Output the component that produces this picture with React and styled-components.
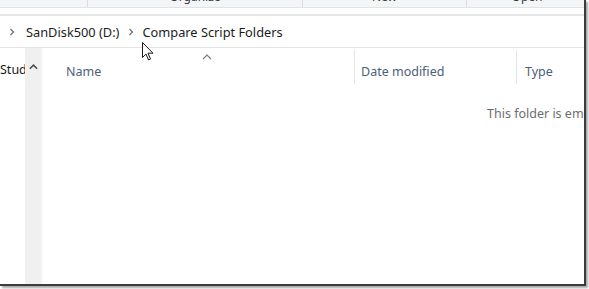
import React from 'react';
import styled, { createGlobalStyle } from 'styled-components';

const GlobalStyle = createGlobalStyle`
  html, body {
    margin: 0;
    padding: 0;
    background: #ffffff;
  }
  body {
    font-family: "Noto Sans", "Open Sans", "Liberation Sans", sans-serif;
  }
`;

const Screen = styled.div`
  position: relative;
  width: 589px;
  height: 289px;
  overflow: hidden;
  background: #ffffff;
`;

const Window = styled.div`
  width: 584px;
  height: 284px;
  display: flex;
  flex-direction: column;
  background: #ffffff;
  border-right: 2px solid #3c3c3c;
  border-bottom: 2px solid #3c3c3c;
  box-shadow: 2px 2px 2px rgba(0, 0, 0, 0.35);
  overflow: hidden;
`;

const Ribbon = styled.div`
  height: 7px;
  flex: none;
  display: flex;
  background: #f4f5f6;
  border-bottom: 1px solid #e1e2e3;
`;

const RibbonGroup = styled.div`
  width: ${p => p.$w}px;
  flex: none;
  display: flex;
  flex-direction: column;
  justify-content: flex-end;
  align-items: center;
  overflow: hidden;
  border-right: ${p => (p.$last ? 'none' : '1px solid #dcdcdc')};
  font-size: 12px;
  line-height: 14px;
  color: #3b3b3b;
  padding-bottom: 3px;
  box-sizing: border-box;
`;

const Gap = styled.div`
  height: 6px;
  flex: none;
  border-bottom: 2px solid #e6e6e6;
`;

const AddressBar = styled.div`
  height: 31px;
  flex: none;
  display: flex;
  align-items: center;
  padding-left: 9px;
  border-bottom: 1px solid #e4e4e4;
  font-size: 12.8px;
  color: #1b1b1b;
`;

const Chevron = styled.span`
  display: inline-flex;
  width: 8px;
  margin-right: ${p => p.$gap}px;
  color: #6b6b6b;
`;

const Crumb = styled.span`
  margin-right: ${p => p.$gap}px;
  white-space: nowrap;
`;

const Body = styled.div`
  flex: 1;
  display: flex;
  min-height: 0;
`;

const NavPane = styled.div`
  width: 25px;
  flex: none;
  overflow: hidden;
  padding-top: 13px;
  font-size: 12.5px;
  color: #1b1b1b;
  white-space: nowrap;
`;

const Scrollbar = styled.div`
  width: 18px;
  flex: none;
  background: #f0f0f0;
  border-right: 2px solid #f8f8f8;
  display: flex;
  justify-content: center;
  padding-top: 16px;
  box-sizing: border-box;
`;

const FilePane = styled.div`
  flex: 1;
  position: relative;
  display: flex;
  flex-direction: column;
`;

const HeaderRow = styled.div`
  height: 36px;
  display: flex;
  align-items: stretch;
  padding-top: 2px;
  box-sizing: border-box;
`;

const HeaderCell = styled.div`
  width: ${p => p.$w}px;
  flex: none;
  position: relative;
  display: flex;
  align-items: flex-end;
  padding-left: ${p => p.$pad}px;
  padding-bottom: 4px;
  box-sizing: border-box;
  border-right: ${p => (p.$sep ? '1px solid #e5e5e5' : 'none')};
  font-size: 12.5px;
  color: #4c607a;
  white-space: nowrap;
`;

const SortCaret = styled.span`
  position: absolute;
  left: 159px;
  top: 4px;
  display: flex;
`;

const Empty = styled.div`
  padding-left: 444px;
  padding-top: 21px;
  font-size: 12.5px;
  color: #6d6d6d;
  white-space: nowrap;
`;

const Cursor = styled.svg`
  position: absolute;
  left: 142px;
  top: 42px;
`;

const ChevronIcon = () => (
  <svg width="6" height="8" viewBox="0 0 6 8">
    <path d="M1.5 1 L4.5 4 L1.5 7" fill="none" stroke="#707070" strokeWidth="1.3" />
  </svg>
);

const Caret = ({ color = '#7a7a7a', w = 10, sw = 1.1 }) => (
  <svg width={w} height="6" viewBox="0 0 10 6">
    <path d="M1 5 L5 1 L9 5" fill="none" stroke={color} strokeWidth={sw} />
  </svg>
);

export default function App() {
  return (
    <>
      <GlobalStyle />
      <Screen>
        <Window>
          <Ribbon>
            <RibbonGroup $w={88} />
            <RibbonGroup $w={215}>Organize</RibbonGroup>
            <RibbonGroup $w={164}>New</RibbonGroup>
            <RibbonGroup $w={120} $last>Open</RibbonGroup>
          </Ribbon>
          <Gap />
          <AddressBar>
            <Chevron $gap={9}><ChevronIcon /></Chevron>
            <Crumb $gap={9}>SanDisk500 (D:)</Crumb>
            <Chevron $gap={6}><ChevronIcon /></Chevron>
            <Crumb $gap={0}>Compare Script Folders</Crumb>
          </AddressBar>
          <Body>
            <NavPane>Studio</NavPane>
            <Scrollbar>
              <Caret color="#505050" w={9} sw={1.8} />
            </Scrollbar>
            <FilePane>
              <HeaderRow>
                <HeaderCell $w={312} $pad={23} $sep>
                  Name
                  <SortCaret><Caret /></SortCaret>
                </HeaderCell>
                <HeaderCell $w={162} $pad={6} $sep>Date modified</HeaderCell>
                <HeaderCell $w={70} $pad={8}>Type</HeaderCell>
              </HeaderRow>
              <Empty>This folder is empty.</Empty>
            </FilePane>
          </Body>
        </Window>
        <Cursor width="12" height="20" viewBox="0 0 12 20">
          <path d="M0.5 0.5 L0.5 15.5 L4 12 L6.5 18 L8.5 17 L6 11.2 L11 11.2 Z" fill="#ffffff" stroke="#1a1a1a" strokeWidth="1" strokeLinejoin="round" />
        </Cursor>
      </Screen>
    </>
  );
}
